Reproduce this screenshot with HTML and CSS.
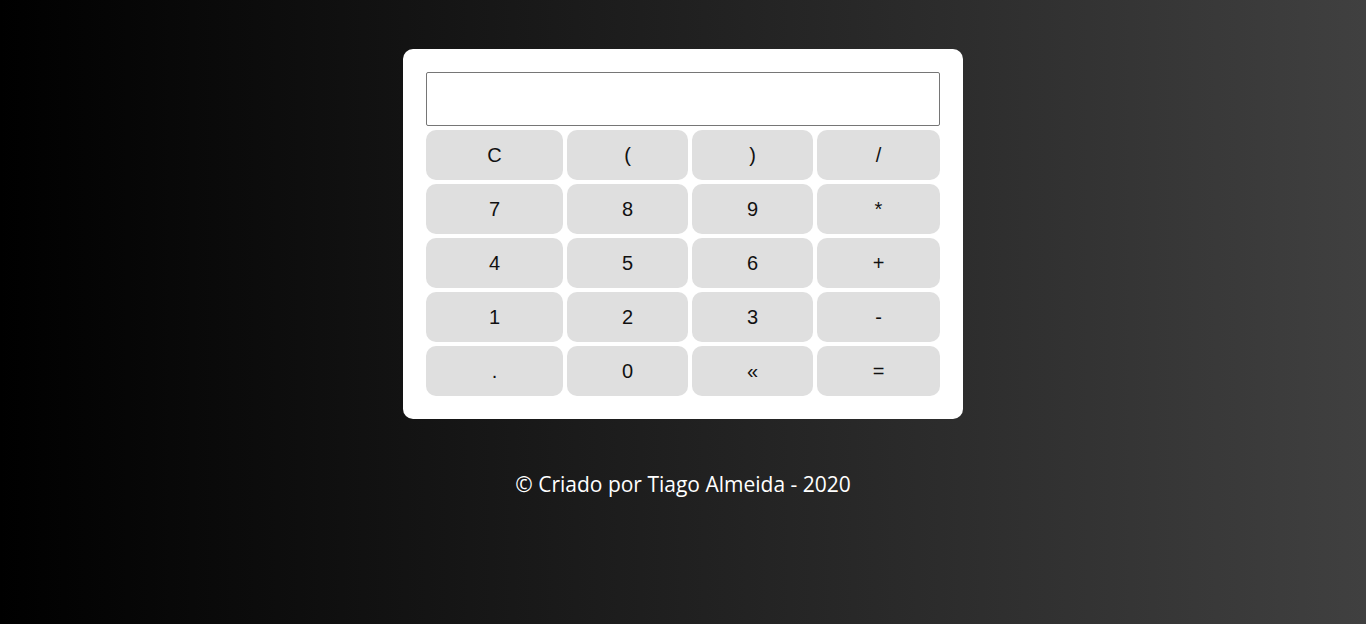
FILE: index.html
```html
<!DOCTYPE html>
<html lang="pt">
<head>
<meta charset="utf-8">
<title>Calculadora</title>
<link rel="stylesheet" href="styles.css">
</head>
<body>
<main class="page">
  <div class="calc">
    <input class="display" type="text">
    <div class="keys">
      <button class="key">C</button>
      <button class="key">(</button>
      <button class="key">)</button>
      <button class="key">/</button>
      <button class="key">7</button>
      <button class="key">8</button>
      <button class="key">9</button>
      <button class="key">*</button>
      <button class="key">4</button>
      <button class="key">5</button>
      <button class="key">6</button>
      <button class="key">+</button>
      <button class="key">1</button>
      <button class="key">2</button>
      <button class="key">3</button>
      <button class="key">-</button>
      <button class="key">.</button>
      <button class="key">0</button>
      <button class="key">&laquo;</button>
      <button class="key">=</button>
    </div>
  </div>
  <p class="footer">&copy; Criado por Tiago Almeida - 2020</p>
</main>
</body>
</html>
```
FILE: styles.css
```css
html, body {
  margin: 0;
  height: 100%;
}
body {
  background: linear-gradient(to right, #000000 0%, #404040 100%);
  font-family: "Open Sans", sans-serif;
}
.page {
  display: flex;
  flex-direction: column;
  align-items: center;
  padding-top: 49px;
}
.calc {
  background: #ffffff;
  border-radius: 10px;
  padding: 23px;
  display: flex;
  flex-direction: column;
  gap: 4px;
}
.display {
  box-sizing: border-box;
  width: 514px;
  height: 54px;
  margin: 0;
  border: 1px solid #767676;
  border-radius: 2px;
  font-family: "Liberation Sans", Arial, sans-serif;
  font-size: 24px;
  padding: 0 8px;
}
.keys {
  display: grid;
  grid-template-columns: 137px 121px 121px 123px;
  grid-auto-rows: 50px;
  gap: 4px;
}
.key {
  border: none;
  background: #dfdfdf;
  border-radius: 10px;
  font-family: "Liberation Sans", Arial, sans-serif;
  font-size: 20px;
  color: #111111;
  padding: 0;
  margin: 0;
}
.footer {
  color: #ffffff;
  font-size: 21px;
  margin: 51px 0 0;
  line-height: 28px;
}
```
